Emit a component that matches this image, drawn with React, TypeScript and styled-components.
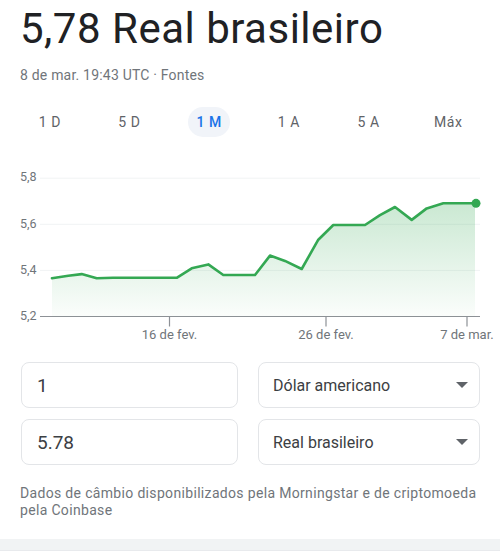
import { useState } from "react"
import styled, { createGlobalStyle } from "styled-components"

const GlobalStyle = createGlobalStyle`
  html, body {
    margin: 0;
    padding: 0;
    background: #ffffff;
    font-family: Roboto, "Liberation Sans", Arial, sans-serif;
  }
`

const ranges = ["1 D", "5 D", "1 M", "1 A", "5 A", "Máx"]

// [x on the chart, rate]
const points: [number, number][] = [
    [52, 5.366], [68.3, 5.377], [81.7, 5.384], [96.7, 5.366], [113, 5.368],
    [176.7, 5.368], [191.7, 5.409], [208.3, 5.426], [223.3, 5.38], [255, 5.38],
    [270, 5.464], [285, 5.441], [301.7, 5.406], [318.3, 5.533], [333.3, 5.597],
    [365, 5.597], [380, 5.64], [395, 5.675], [411.7, 5.619], [426.7, 5.669],
    [443.3, 5.691], [475, 5.691],
]

const yTicks = [5.8, 5.6, 5.4, 5.2]
const xTicks = [
    { x: 169.5, label: "16 de fev." },
    { x: 326, label: "26 de fev." },
    { x: 467, label: "7 de mar." },
]

const toY = (v: number) => 152.5 - (v - 5.2) * 230.5
const baseY = toY(5.2)

const Chart = () => {
    const line = points.map(([x, v], i) => `${i ? "L" : "M"}${x},${toY(v).toFixed(1)}`).join(" ")
    const first = points[0]
    const last = points[points.length - 1]
    const area = `${line} L${last[0]},${baseY} L${first[0]},${baseY} Z`

    return (
        <ChartBox>
            <svg width="500" height="180" viewBox="0 0 500 180">
                <defs>
                    <linearGradient id="fill" x1="0" y1="0" x2="0" y2="1">
                        <stop offset="0" stopColor="#34a853" stopOpacity="0.26" />
                        <stop offset="1" stopColor="#34a853" stopOpacity="0.02" />
                    </linearGradient>
                </defs>
                {yTicks.map(v => (
                    <g key={v}>
                        <line x1="40" x2="480" y1={toY(v)} y2={toY(v)} stroke={v === 5.2 ? "#8d9196" : "#f1f3f4"} strokeWidth="1" />
                        <text x="20" y={toY(v)} dominantBaseline="middle" fontSize="12.5" fill="#70757a">
                            {v.toFixed(1).replace(".", ",")}
                        </text>
                    </g>
                ))}
                <path d={area} fill="url(#fill)" />
                <path d={line} fill="none" stroke="#34a853" strokeWidth="2.6" strokeLinejoin="round" strokeLinecap="round" />
                <circle cx={last[0] + 1} cy={toY(last[1])} r="4.5" fill="#34a853" />
                {xTicks.map(t => (
                    <g key={t.label}>
                        <line x1={t.x} x2={t.x} y1={baseY} y2={baseY + 10} stroke="#8d9196" strokeWidth="1.2" />
                        <text x={t.x} y="175" textAnchor="middle" fontSize="13" fill="#70757a">{t.label}</text>
                    </g>
                ))}
            </svg>
        </ChartBox>
    )
}

const Caret = () => (
    <svg width="12" height="6" viewBox="0 0 12 6">
        <path d="M0 0 L12 0 L6 6 Z" fill="#5f6368" />
    </svg>
)

const App = () => {
    const [range, setRange] = useState("1 M")

    return (
        <Page>
            <GlobalStyle />
            <Header>
                <Title>5,78 Real brasileiro</Title>
                <Meta>8 de mar. 19:43 UTC · Fontes</Meta>
            </Header>
            <TabBar>
                {ranges.map(r => (
                    <Tab key={r} onClick={() => setRange(r)}>
                        <TabLabel $active={r === range}>{r}</TabLabel>
                    </Tab>
                ))}
            </TabBar>
            <Chart />
            <Converter>
                <Field><Amount>1</Amount></Field>
                <Field $select><Currency>Dólar americano</Currency><Caret /></Field>
                <Field><Amount>5.78</Amount></Field>
                <Field $select><Currency>Real brasileiro</Currency><Caret /></Field>
            </Converter>
            <Disclaimer>
                Dados de câmbio disponibilizados pela Morningstar e de criptomoeda pela Coinbase
            </Disclaimer>
            <BottomStrip />
        </Page>
    )
}

const Page = styled.div`
width: 500px;
height: 551px;
overflow: hidden;
background: #fff;
`;

const Header = styled.div`
padding: 5px 20px 0;
`;

const Title = styled.h1`
margin: 0;
font-size: 42px;
line-height: 48px;
letter-spacing: 0.5px;
font-weight: 400;
color: #202124;
`;

const Meta = styled.div`
margin-top: 12px;
font-size: 14px;
line-height: 20px;
letter-spacing: 0.2px;
color: #70757a;
`;

const TabBar = styled.div`
display: flex;
margin-top: 22px;
padding: 0 12px 0 10px;
`;

const Tab = styled.div`
flex: 1;
display: flex;
justify-content: center;
cursor: pointer;
`;

const TabLabel = styled.span<{ $active?: boolean }>`
height: 30px;
line-height: 30px;
padding: 0 8px;
border-radius: 15px;
font-size: 14px;
letter-spacing: 0.6px;
font-weight: ${p => p.$active ? 500 : 400};
color: ${p => p.$active ? "#1a73e8" : "#5f6368"};
background: ${p => p.$active ? "#f1f4f9" : "transparent"};
`;

const ChartBox = styled.div`
margin-top: 27px;
height: 180px;
svg {
    display: block;
    font-family: Roboto, "Liberation Sans", Arial, sans-serif;
}
`;

const Converter = styled.div`
display: grid;
grid-template-columns: 217px 222px;
column-gap: 20px;
row-gap: 11px;
margin-top: 18px;
padding: 0 20px 0 21px;
`;

const Field = styled.div<{ $select?: boolean }>`
height: 46px;
box-sizing: border-box;
border: 1px solid #e3e5e8;
border-radius: 8px;
display: flex;
align-items: center;
justify-content: space-between;
padding: ${p => p.$select ? "0 11px 0 14px" : "0 15px"};
`;

const Amount = styled.span`
font-size: 19px;
color: #3c4043;
`;

const Currency = styled.span`
font-size: 16px;
color: #3c4043;
`;

const Disclaimer = styled.p`
margin: 20px 20px 0;
font-size: 14px;
line-height: 17px;
letter-spacing: 0.33px;
color: #70757a;
`;

const BottomStrip = styled.div`
margin-top: 20px;
height: 11px;
background: #f1f3f4;
border-bottom: 1px solid #e8eaed;
`;

export default App
